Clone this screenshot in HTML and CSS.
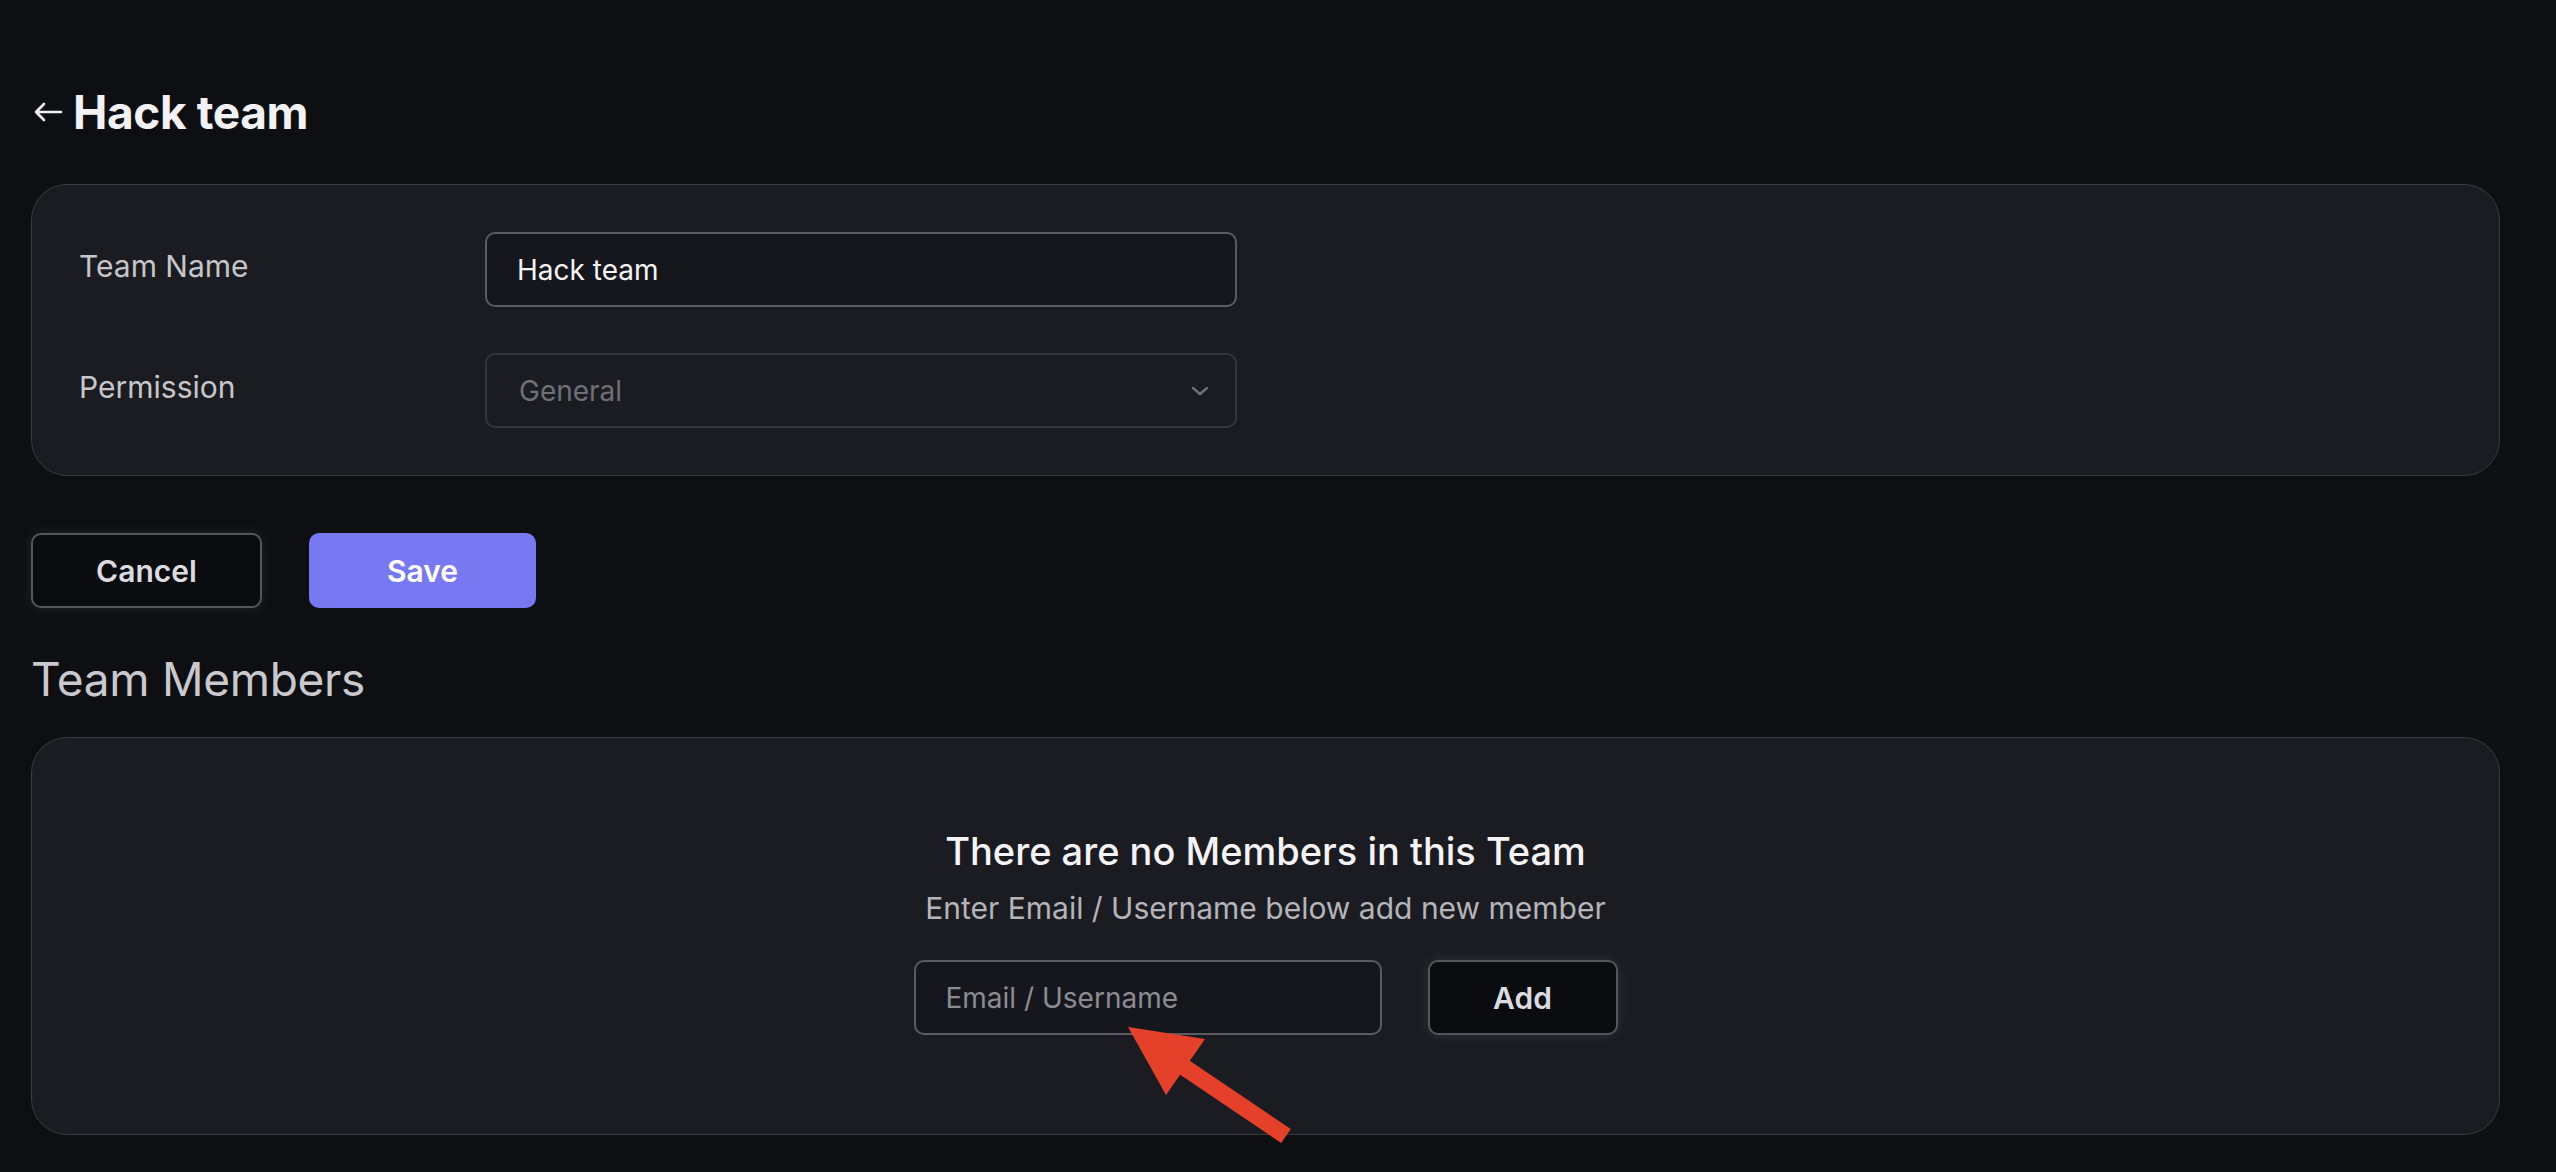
FILE: index.html
```html
<!DOCTYPE html>
<html lang="en">
<head>
    <meta charset="UTF-8">
    <title>Hack team</title>
    <meta name="viewport" content="width=device-width, initial-scale=1.0">
    <link rel="stylesheet" href="styles.css">
</head>
<body>
    <!-- Page header -->
    <div class="page-header">
        <svg class="back-icon" width="30" height="20" viewBox="0 0 30 20">
            <path d="M28 10H3M11 2L3 10l8 8" fill="none" stroke="#f2f2f4" stroke-width="2.6" stroke-linecap="round" stroke-linejoin="round"/>
        </svg>
        <h1>Hack team</h1>
    </div>

    <!-- Team settings -->
    <div class="card settings">
        <label class="field-label" for="teamName">Team Name</label>
        <input class="field-input" type="text" id="teamName" value="Hack team">

        <span class="field-label">Permission</span>
        <div class="field-select">
            <span>General</span>
            <svg width="18" height="10" viewBox="0 0 18 10">
                <path d="M2 2l7 6 7-6" fill="none" stroke="#6f7076" stroke-width="2.4" stroke-linecap="round" stroke-linejoin="round"/>
            </svg>
        </div>
    </div>

    <div class="actions">
        <button class="btn btn-outline btn-cancel">Cancel</button>
        <button class="btn btn-primary">Save</button>
    </div>

    <h2 class="section-title">Team Members</h2>

    <!-- Empty members state -->
    <div class="card members">
        <div class="empty-title">There are no Members in this Team</div>
        <div class="empty-sub">Enter Email / Username below add new member</div>
        <div class="add-row">
            <input class="field-input member-input" type="text" placeholder="Email / Username">
            <button class="btn btn-outline btn-add">Add</button>
        </div>
    </div>

    <!-- Annotation arrow -->
    <svg class="pointer" width="200" height="140" viewBox="0 0 200 140">
        <line x1="62" y1="49" x2="176" y2="126" stroke="#e5412a" stroke-width="17"/>
        <polygon points="18,17 95,29 56,85" fill="#e5412a"/>
    </svg>
</body>
</html>
```

FILE: styles.css
```css
/* Reset */
* {
    margin: 0;
    padding: 0;
    box-sizing: border-box;
}

body {
    position: relative;
    min-height: 1172px;
    padding: 84px 56px 0 31px;
    background-color: #0e0f13;
    color: #f2f2f4;
    font-family: Inter, "Noto Sans", sans-serif;
}

/* Header */
.page-header {
    display: flex;
    align-items: center;
    height: 56px;
    gap: 10px;
}

.back-icon {
    margin-left: 2px;
}

.page-header h1 {
    font-size: 46px;
    line-height: 56px;
    font-weight: 700;
    letter-spacing: -0.4px;
}

/* Cards */
.card {
    background-color: #1b1c22;
    border: 1px solid #3a3b41;
    border-radius: 36px;
}

.settings {
    margin-top: 44px;
    padding: 47px;
    display: grid;
    grid-template-columns: 406px 752px;
    grid-auto-rows: 75px;
    row-gap: 46px;
    align-items: center;
}

.field-label {
    font-size: 30px;
    color: #c6c6ca;
    padding-bottom: 8px;
}

.field-input {
    height: 75px;
    padding: 0 30px;
    background-color: #16171d;
    border: 2px solid #5b5c62;
    border-radius: 10px;
    color: #f4f4f6;
    font-family: Inter, sans-serif;
    font-size: 28px;
    outline: none;
}

.field-input::placeholder {
    color: #8b8c92;
}

.field-select {
    height: 75px;
    padding: 0 26px 0 32px;
    display: flex;
    align-items: center;
    justify-content: space-between;
    border: 2px solid #34353b;
    border-radius: 10px;
    color: #6f7076;
    font-size: 28px;
}

/* Buttons */
.actions {
    margin-top: 57px;
    display: flex;
    gap: 47px;
}

.btn {
    height: 75px;
    border-radius: 10px;
    font-family: Inter, sans-serif;
    font-size: 30px;
    font-weight: 600;
    cursor: pointer;
}

.btn-outline {
    background-color: #0b0c10;
    border: 2px solid #55565c;
    color: #dcdce0;
    box-shadow: 0 0 14px rgba(255, 255, 255, 0.09);
}

.btn-cancel {
    width: 231px;
}

.btn-primary {
    width: 227px;
    background-color: #7878f2;
    border: none;
    color: #ffffff;
}

.section-title {
    margin-top: 43px;
    font-size: 46px;
    line-height: 56px;
    font-weight: 400;
    color: #c9c9cd;
    letter-spacing: -0.3px;
}

/* Members */
.members {
    margin-top: 30px;
    height: 398px;
    padding-top: 90px;
    display: flex;
    flex-direction: column;
    align-items: center;
}

.empty-title {
    font-size: 38px;
    line-height: 46px;
    font-weight: 500;
    color: #f4f4f6;
}

.empty-sub {
    margin-top: 16px;
    font-size: 30px;
    line-height: 36px;
    color: #b4b4b9;
}

.add-row {
    margin-top: 34px;
    display: flex;
    gap: 46px;
}

.member-input {
    width: 468px;
}

.btn-add {
    width: 190px;
}

/* Annotation */
.pointer {
    position: absolute;
    left: 1110px;
    top: 1010px;
}
```
